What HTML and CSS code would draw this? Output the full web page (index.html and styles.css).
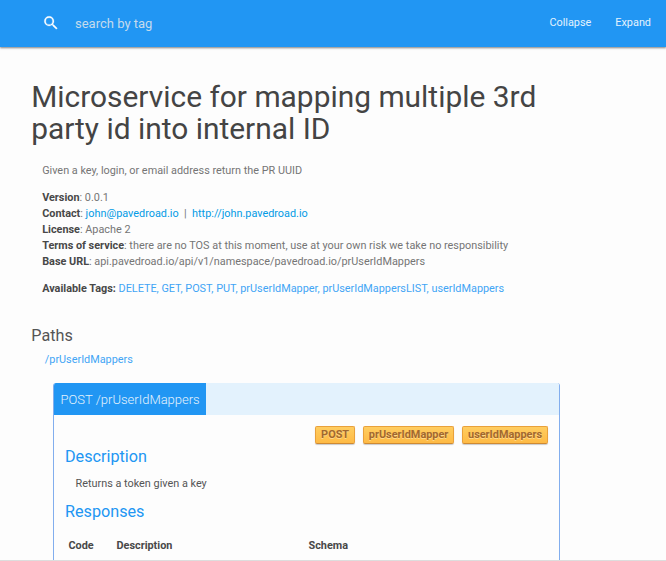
FILE: index.html
```html
<!DOCTYPE html>
<html lang="en">
<head>
<meta charset="utf-8">
<title>Microservice for mapping multiple 3rd party id into internal ID</title>
<link rel="stylesheet" href="styles.css">
</head>
<body>
<header class="topbar">
  <svg class="search-icon" viewBox="0 0 24 24" width="18" height="18"><path fill="#fff" stroke="#fff" stroke-width=".3" d="M15.5 14h-.79l-.28-.27A6.47 6.47 0 0 0 16 9.5 6.5 6.5 0 1 0 9.5 16c1.61 0 3.09-.59 4.23-1.57l.27.28v.79l5 4.99L20.49 19l-4.99-5zm-6 0a4.5 4.5 0 1 1 0-9 4.5 4.5 0 0 1 0 9z"/></svg>
  <span class="search">search by tag</span>
  <nav><a>Collapse</a><a>Expand</a></nav>
</header>
<main>
  <h1>Microservice for mapping multiple 3rd<br>party id into internal ID</h1>
  <section class="info">
    <p>Given a key, login, or email address return the PR UUID</p>
    <p><b>Version</b>: 0.0.1<br>
    <b>Contact</b>: <a class="link">john@pavedroad.io</a> &nbsp;|&nbsp; <a class="link">http://john.pavedroad.io</a><br>
    <b>License</b>: Apache 2<br>
    <b>Terms of service</b>: there are no TOS at this moment, use at your own risk we take no responsibility<br>
    <b>Base URL</b>: api.pavedroad.io/api/v1/namespace/pavedroad.io/prUserIdMappers</p>
    <p class="tags"><b>Available Tags:</b> <a>DELETE, </a><a>GET, </a><a>POST, </a><a>PUT, </a><a>prUserIdMapper, </a><a>prUserIdMappersLIST, </a><a>userIdMappers</a></p>
  </section>
  <h2>Paths</h2>
  <a class="path">/prUserIdMappers</a>
  <article class="card">
    <div class="card-head"><span class="method">POST /prUserIdMappers</span></div>
    <div class="badges"><span>POST</span><span>prUserIdMapper</span><span>userIdMappers</span></div>
    <h3>Description</h3>
    <p class="desc">Returns a token given a key</p>
    <h3>Responses</h3>
    <div class="row"><b>Code</b><b>Description</b><b>Schema</b></div>
  </article>
</main>
</body>
</html>
```

FILE: styles.css
```css
* { box-sizing: border-box; }
body { margin: 0; height: 561px; display: flex; flex-direction: column; overflow: hidden; background: #fdfdfd; font-family: Roboto, sans-serif; font-size: 10.86px; line-height: 16px; color: #757575; border-bottom: 1px solid #ddd; }
.topbar { flex: none; height: 47px; background: #2196f3; color: #e3f2fd; display: flex; align-items: center; padding: 0 15px 2px 42px; box-shadow: 0 1px 2px rgba(0,0,0,.5); }
.search { margin: 2px 0 0 15px; font-size: 13px; color: #c5dbed; }
nav { margin-left: auto; display: flex; gap: 24px; }
main { flex: 1; min-height: 0; display: flex; flex-direction: column; padding: 0 31px; }
h1 { margin: 34px 0 0; padding-left: .2px; font-size: 29.9px; line-height: 32px; font-weight: 400; color: #444; white-space: nowrap; }
.info { padding: 18px 0 0 11.15px; white-space: nowrap; }
.info p { margin: 0 0 11px; }
b { color: #484848; font-weight: 700; }
.link { color: #039be5; }
.tags a, .path { color: #42a5f5; }
h2 { margin: 18px 0 0; padding-left: .3px; font-size: 16.2px; line-height: 20px; font-weight: 400; color: #555; }
.path { display: block; margin: 6px 0 0 13.8px; }
.card { flex: 1; min-height: 0; margin: 15px 0 0 22px; width: 507px; border: solid #82aeee; border-width: 0 1px; border-radius: 3px 3px 0 0; overflow: hidden; }
.card-head { height: 32px; background: #e3f2fd; display: flex; }
.method { background: #2196f3; color: #e3f2fd; font-size: 13px; font-weight: 300; line-height: 34px; padding: 0 6.5px; width: 152px; white-space: nowrap; }
.badges { display: flex; justify-content: flex-end; gap: 7.7px; padding: 11px 11px 0 0; }
.badges span { height: 18px; line-height: 16px; padding: 0 5px; font-size: 10.9px; font-weight: 700; color: #a2682f; background: linear-gradient(#ffcd60, #feba45); border: 1px solid #e9a13b; border-bottom-color: #cf8a32; border-radius: 2px; box-shadow: 0 1px 1px rgba(0,0,0,.2); text-shadow: 0 1px 0 #ffd98a; }
h3 { margin: 3px 0 0 11px; font-size: 16.2px; line-height: 20px; font-weight: 400; color: #2196f3; }
.desc { margin: 9px 0 10px 21.5px; color: #555; }
.row { display: grid; grid-template-columns: 48px 192px 1fr; margin: 16px 0 0 14.5px; }
```
